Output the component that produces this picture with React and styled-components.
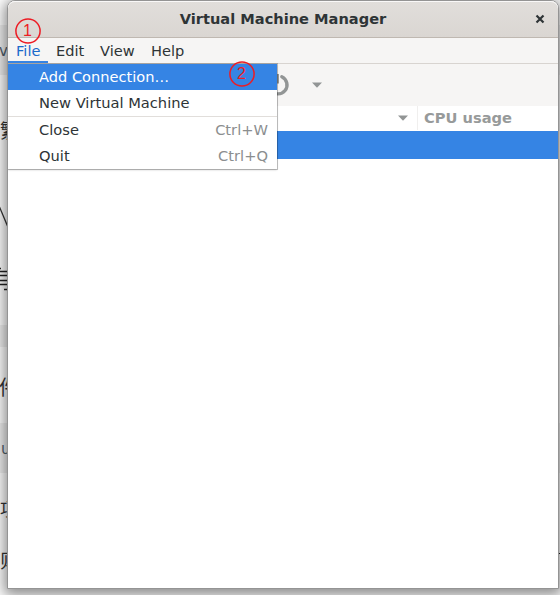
import React from "react";
import styled, { createGlobalStyle } from "styled-components";

const GlobalStyle = createGlobalStyle`
  * { box-sizing: border-box; }
  body {
    margin: 0;
    background: #fff;
    overflow: hidden;
    font-family: "DejaVu Sans", sans-serif;
    font-size: 14.6px;
    color: #2e3436;
  }
`;

const Desktop = styled.div`
  display: grid;
  grid-template: 595px / 560px;
  overflow: hidden;
  background: #fff;
  & > * { grid-area: 1 / 1; }
`;

const Backdrop = styled.div`
  display: flex;
  flex-direction: column;
  overflow: hidden;
`;

const Strip = styled.div`
  flex: none;
  display: flex;
  align-items: flex-start;
  justify-content: space-between;
  height: ${(p) => p.$height}px;
  background: ${(p) => (p.$shaded ? "#f0f0f0" : "transparent")};
  white-space: nowrap;
`;

const Fragment = styled.span`
  margin-left: ${(p) => p.$shift}px;
  font-family: ${(p) => (p.$latin ? '"DejaVu Sans"' : '"Noto Sans CJK SC"')}, sans-serif;
  font-size: ${(p) => p.$size}px;
  line-height: ${(p) => p.$line}px;
  color: ${(p) => (p.$latin ? "#50616d" : "#333")};
`;

const EdgeMark = styled.span`
  width: 3px;
  height: 1px;
  margin-top: 4px;
  background: #222;
`;

const Window = styled.main`
  z-index: 1;
  width: 552px;
  height: 589px;
  margin-left: 7px;
  display: flex;
  flex-direction: column;
  border: 1px solid #949494;
  border-radius: 8px 8px 0 0;
  background: #fff;
  box-shadow: 0 3px 14px 3px rgba(0, 0, 0, 0.46);
`;

const TitleBar = styled.header`
  flex: none;
  height: 37px;
  display: grid;
  grid-template-columns: 36px 1fr 36px;
  align-items: center;
  border-radius: 7px 7px 0 0;
  border-bottom: 1px solid #bfb8b1;
  background: linear-gradient(to top, #dad6d2, #e1dedb);
  box-shadow: inset 0 1px #f9f8f8;
`;

const Title = styled.h1`
  grid-column: 2;
  margin: 0;
  text-align: center;
  font-size: 14.6px;
  line-height: 18px;
`;

const CloseButton = styled.button`
  display: grid;
  place-items: center;
  border: 0;
  padding: 0;
  background: none;
`;

const MenuBar = styled.nav`
  flex: none;
  height: 26px;
  display: flex;
  background: #f6f5f4;
  border-bottom: 1px solid #d8d4d0;
`;

const MenuBarItem = styled.span`
  width: ${(p) => p.$width}px;
  height: 25px;
  padding-left: 8px;
  white-space: nowrap;
  line-height: 26px;
  color: ${(p) => (p.$active ? "#1b6acb" : "#2e3436")};
  box-shadow: ${(p) => (p.$active ? "inset 0 -2px #3584e4" : "none")};
`;

const Toolbar = styled.div`
  flex: none;
  height: 42px;
  padding-left: 258px;
  display: flex;
  align-items: center;
  gap: 22px;
  background: #f6f5f4;
`;

const TableHead = styled.div`
  flex: none;
  height: 25px;
  display: grid;
  grid-template-columns: 410px 1fr;
  color: #979a9a;
  font-size: 14.67px;
  font-weight: bold;
  line-height: 24px;
`;

const HeadCell = styled.div`
  height: 24px;
  display: flex;
  align-items: center;
  justify-content: ${(p) => (p.$sort ? "flex-end" : "flex-start")};
  padding: ${(p) => (p.$sort ? "0 9px 0 0" : "0 0 0 6px")};
  border-right: ${(p) => (p.$sort ? "1px solid #f0efee" : "0")};
`;

const SelectedRow = styled.div`
  flex: none;
  height: 28px;
  background: #3584e4;
`;

const Menu = styled.div`
  position: absolute;
  z-index: 2;
  left: 8px;
  top: 64px;
  width: 269px;
  background: #fff;
  box-shadow: 0 0 0 1px rgba(0, 0, 0, 0.22), 0 1px 2px rgba(0, 0, 0, 0.2);
  clip-path: inset(-1px -4px -4px 0);
`;

const MenuItem = styled.div`
  height: 26px;
  display: flex;
  justify-content: space-between;
  padding: 0 9px 0 31px;
  font-size: ${(p) => (p.$active ? 14.6 : 14.67)}px;
  line-height: 26px;
  color: ${(p) => (p.$active ? "#fff" : "#2e3436")};
  background: ${(p) => (p.$active ? "#3584e4" : "transparent")};
`;

const Shortcut = styled.span`
  color: #8b8e8f;
`;

const Separator = styled.div`
  height: 1px;
  background: #e1dedb;
`;

const CalloutMark = styled.div`
  position: absolute;
  z-index: 3;
  left: ${(p) => p.$x}px;
  top: ${(p) => p.$y}px;
  display: grid;
  grid-template: 26px / 26px;
  color: #ed1c24;
  font: 16px/26px "Liberation Sans", sans-serif;
  text-align: center;
  & > * { grid-area: 1 / 1; }
`;

const Callout = ({ x, y, children }) => (
  <CalloutMark $x={x} $y={y}>
    <svg width="26" height="26" viewBox="0 0 26 26">
      <circle cx="13" cy="13" r="12.1" fill="none" stroke="currentColor" strokeWidth="1.5" />
    </svg>
    <span>{children}</span>
  </CalloutMark>
);

const Arrow = () => (
  <svg width="10" height="6" viewBox="0 0 10 6">
    <path d="M0 .5h10L5 5.7z" fill="#929595" />
  </svg>
);

const menus = [
  { name: "File", width: 40 },
  { name: "Edit", width: 44 },
  { name: "View", width: 51 },
  { name: "Help", width: 49 },
];

export default function App() {
  return (
    <>
      <GlobalStyle />
      <Desktop>
        <Backdrop>
          <Strip $height={25} />
          <Strip $height={50} $shaded>
            <Fragment $latin $size={15} $line={53} $shift={-1}>v</Fragment>
          </Strip>
          <Strip $height={42} />
          <Strip $height={28}>
            <Fragment $size={19} $line={26} $shift={0}>繁</Fragment>
          </Strip>
          <Strip $height={61} />
          <Strip $height={52}>
            <svg width="10" height="30" viewBox="0 0 10 30">
              <path d="M-.5 1 10 26" stroke="#333" strokeWidth="1.3" />
            </svg>
          </Strip>
          <Strip $height={42}>
            <svg width="10" height="42" viewBox="0 0 10 42">
              <path d="M0 10.5h1M0 13.5h8M0 17.5h8M0 22.5h8M0 26.5h8M4 31.5h4" stroke="#222" strokeWidth="1.4" />
            </svg>
          </Strip>
          <Strip $height={25} />
          <Strip $height={22} $shaded />
          <Strip $height={26} />
          <Strip $height={28}>
            <Fragment $size={20} $line={28} $shift={-1}>件</Fragment>
          </Strip>
          <Strip $height={22} />
          <Strip $height={50} $shaded>
            <Fragment $latin $size={15} $line={52} $shift={1}>u</Fragment>
          </Strip>
          <Strip $height={22} />
          <Strip $height={28}>
            <Fragment $size={18} $line={26} $shift={0}>项</Fragment>
          </Strip>
          <Strip $height={26} />
          <Strip $height={46}>
            <Fragment $size={19} $line={22} $shift={0}>则</Fragment>
            <EdgeMark />
          </Strip>
        </Backdrop>
        <Window>
          <TitleBar>
            <Title>Virtual Machine Manager</Title>
            <CloseButton aria-label="Close window">
              <svg width="10" height="10" viewBox="0 0 10 10">
                <path d="M1.5 1.5l7 7m0-7l-7 7" stroke="#2e3436" strokeWidth="2.2" />
              </svg>
            </CloseButton>
          </TitleBar>
          <MenuBar>
            {menus.map(({ name, width }) => (
              <MenuBarItem key={name} $width={width} $active={name === "File"}>{name}</MenuBarItem>
            ))}
          </MenuBar>
          <Toolbar>
            <svg width="24" height="24" viewBox="0 0 24 24">
              <path d="M15.8 3.7a9 9 0 1 1-7.6 0" fill="none" stroke="#929595" strokeWidth="3.4" strokeLinecap="round" />
              <path d="M9 1h4v9.5H9z" fill="#929595" />
            </svg>
            <Arrow />
          </Toolbar>
          <TableHead>
            <HeadCell $sort><Arrow /></HeadCell>
            <HeadCell>CPU usage</HeadCell>
          </TableHead>
          <SelectedRow />
        </Window>
      </Desktop>
      <Menu>
        <MenuItem $active>Add Connection…</MenuItem>
        <MenuItem>New Virtual Machine</MenuItem>
        <Separator />
        <MenuItem>Close<Shortcut>Ctrl+W</Shortcut></MenuItem>
        <MenuItem>Quit<Shortcut>Ctrl+Q</Shortcut></MenuItem>
      </Menu>
      <Callout x={14.5} y={17.5}>1</Callout>
      <Callout x={228.5} y={60.5}>2</Callout>
    </>
  );
}
